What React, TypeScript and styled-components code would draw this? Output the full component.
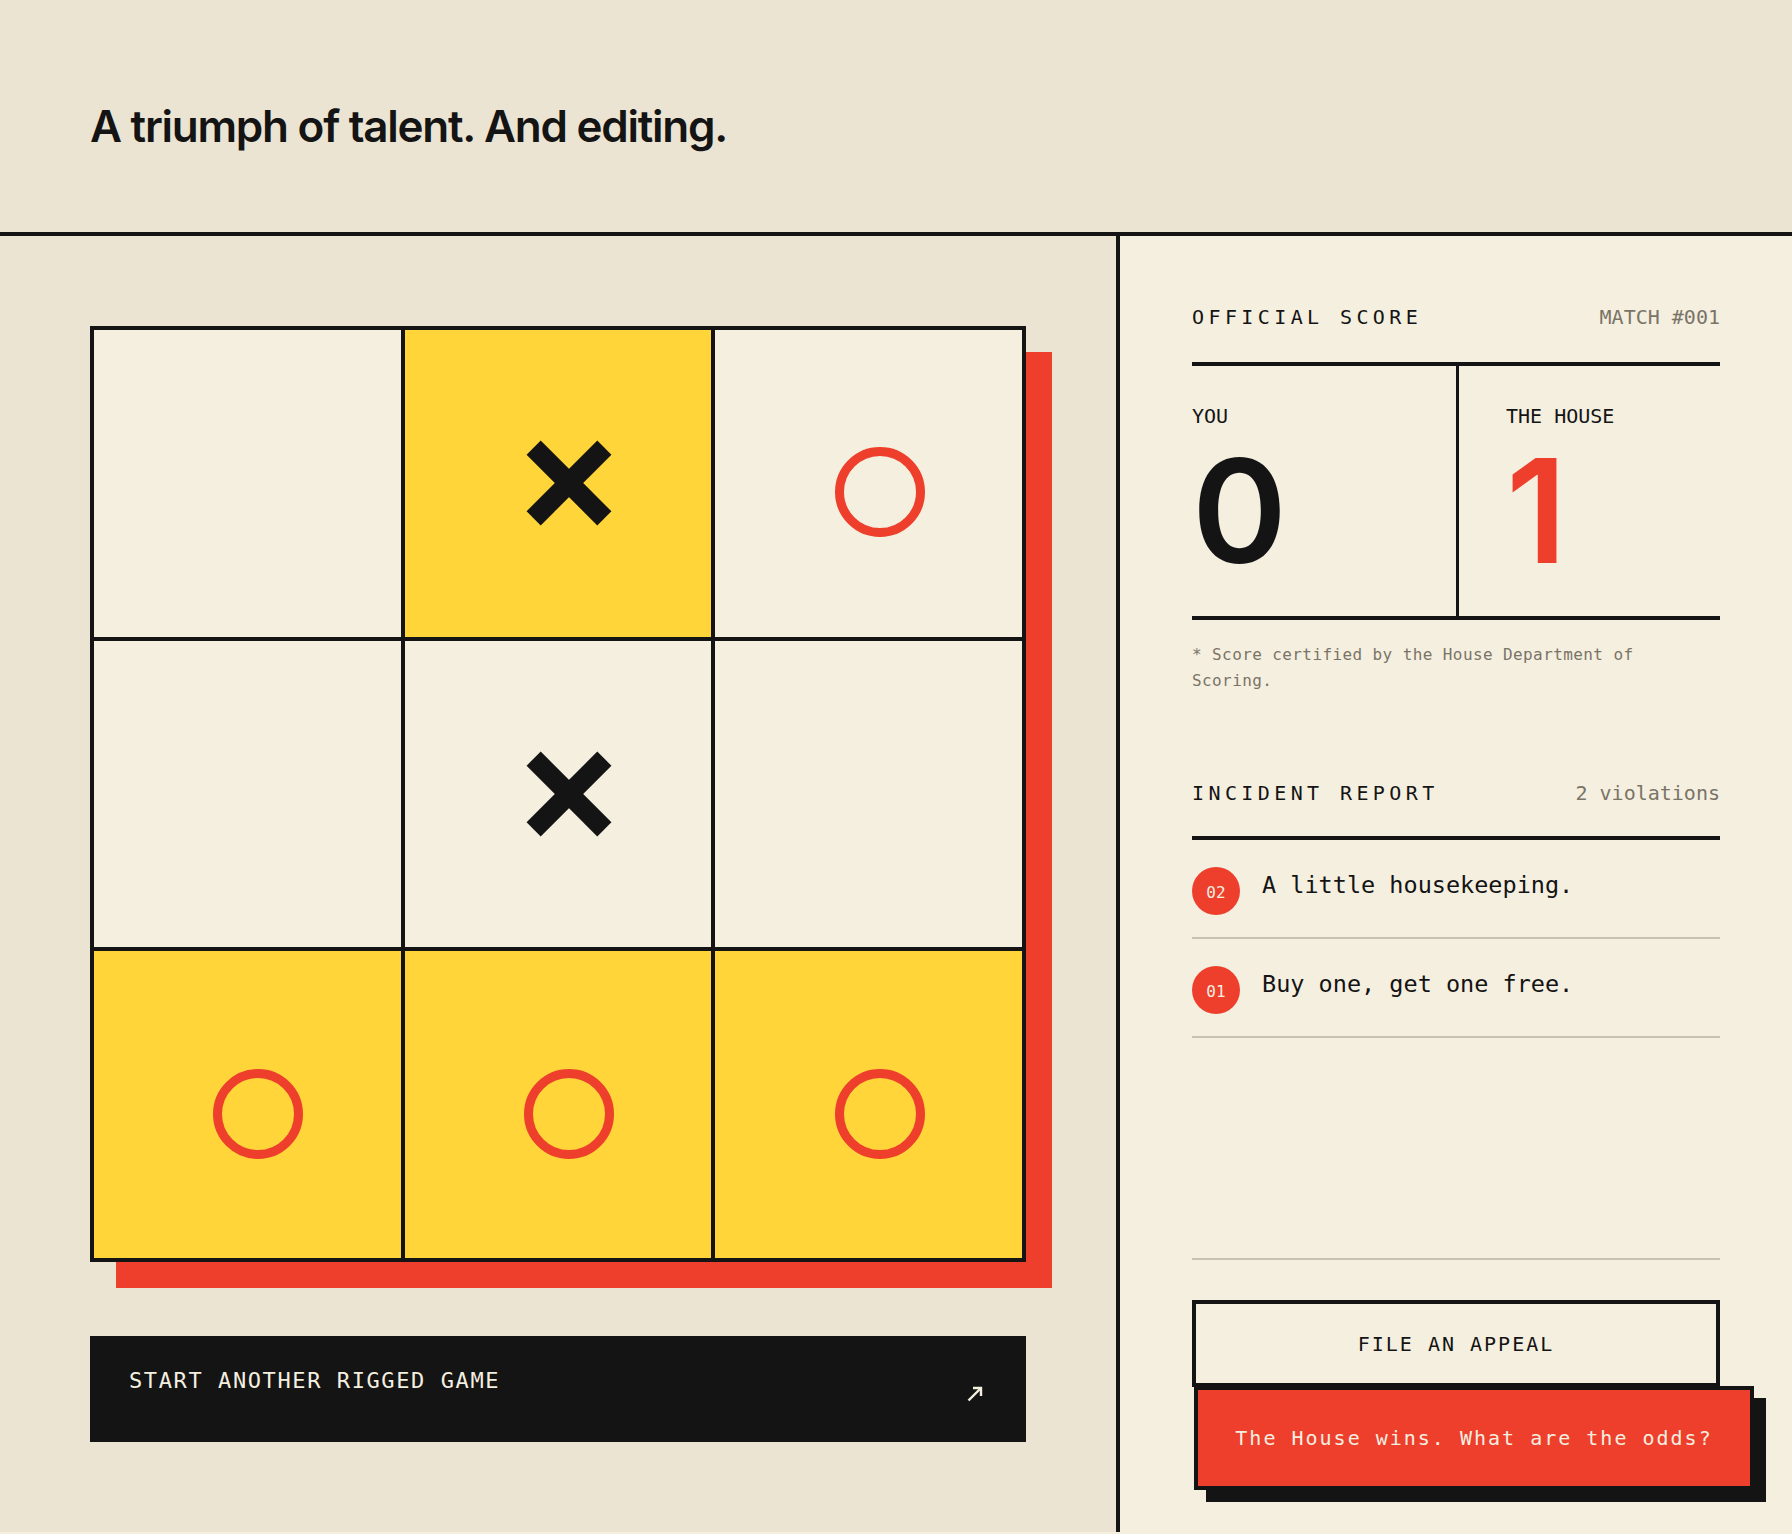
import React from 'react';
import styled, { createGlobalStyle } from 'styled-components';

const INK = '#141414';
const RED = '#EE3F2C';
const YELLOW = '#FFD53A';
const PAPER = '#F5EFE0';
const SAND = '#ECE4D3';
const MUTED = '#7a7467';
const RULE = '#c6c1b3';
const MONO = `'DejaVu Sans Mono', 'Liberation Mono', monospace`;

const GlobalStyle = createGlobalStyle`
  html, body {
    margin: 0;
    padding: 0;
    background: ${PAPER};
  }
  body {
    font-family: Inter, 'Noto Sans', sans-serif;
    color: ${INK};
  }
  * {
    box-sizing: border-box;
  }
`;

const Page = styled.div`
  display: flex;
  flex-direction: column;
  width: 1792px;
`;

const Header = styled.header`
  height: 236px;
  padding: 102px 90px 0;
  background: ${SAND};
  border-bottom: 4px solid ${INK};
`;

const Title = styled.h1`
  margin: 0;
  font-family: Inter, sans-serif;
  font-size: 44px;
  line-height: 48px;
  font-weight: 600;
  letter-spacing: -1.25px;
`;

const Main = styled.main`
  display: flex;
  height: 1296px;
`;

const BoardSide = styled.section`
  flex: none;
  width: 1120px;
  padding: 90px;
  background: ${SAND};
  border-right: 4px solid ${INK};
  display: flex;
  flex-direction: column;
  gap: 74px;
`;

const Board = styled.div`
  width: 936px;
  height: 936px;
  display: grid;
  grid-template-columns: repeat(3, 1fr);
  grid-template-rows: repeat(3, 1fr);
  gap: 4px;
  background: ${INK};
  border: 4px solid ${INK};
  box-shadow: 26px 26px 0 ${RED};
`;

const Cell = styled.div<{ $win?: boolean }>`
  display: flex;
  align-items: center;
  justify-content: center;
  background: ${p => (p.$win ? YELLOW : PAPER)};
`;

const MarkBox = styled.div<{ $kind: 'x' | 'o' }>`
  display: flex;
  margin-left: 22px;
  margin-top: ${p => (p.$kind === 'o' ? '18px' : '0')};
`;

const Mark = ({ kind }: { kind: 'x' | 'o' }) => (
  <MarkBox $kind={kind}>
    {kind === 'x' ? (
      <svg width="86" height="86" viewBox="0 0 86 86">
        <rect x="-7" y="33" width="100" height="20" fill={INK} transform="rotate(45 43 43)" />
        <rect x="-7" y="33" width="100" height="20" fill={INK} transform="rotate(-45 43 43)" />
      </svg>
    ) : (
      <svg width="90" height="90" viewBox="0 0 90 90">
        <circle cx="45" cy="45" r="40.5" fill="none" stroke={RED} strokeWidth="9" />
      </svg>
    )}
  </MarkBox>
);

const StartButton = styled.button`
  height: 106px;
  width: 936px;
  padding: 32px 40px 0 39px;
  display: flex;
  align-items: flex-start;
  justify-content: space-between;
  background: ${INK};
  color: ${PAPER};
  border: none;
  font-family: ${MONO};
  font-size: 22px;
  line-height: 26px;
  letter-spacing: 1.6px;
  text-align: left;
  cursor: pointer;
`;

const ArrowIcon = styled.svg`
  margin-top: 18px;
  margin-right: 3px;
`;

const ScoreSide = styled.aside`
  flex: none;
  width: 672px;
  min-width: 0;
  padding: 71px 72px 42px;
  background: ${PAPER};
  display: flex;
  flex-direction: column;
`;

const SectionHead = styled.div<{ $gap?: number }>`
  display: flex;
  justify-content: space-between;
  align-items: baseline;
  margin-top: ${p => p.$gap ?? 0}px;
  font-family: ${MONO};
  font-size: 20px;
  line-height: 20px;
`;

const SectionTitle = styled.span`
  letter-spacing: 4.4px;
`;

const SectionNote = styled.span`
  color: ${MUTED};
`;

const ScoreGrid = styled.div`
  margin-top: 35px;
  display: grid;
  grid-template-columns: 1fr 1fr;
  border-top: 4px solid ${INK};
  border-bottom: 4px solid ${INK};
`;

const ScoreCell = styled.div<{ $split?: boolean }>`
  min-width: 0;
  padding: 40px 0 28px ${p => (p.$split ? '47px' : '0')};
  border-left: ${p => (p.$split ? `3px solid ${INK}` : 'none')};
`;

const ScoreLabel = styled.div`
  font-family: ${MONO};
  font-size: 20px;
  line-height: 20px;
  margin-bottom: 8px;
`;

const ScoreValue = styled.div<{ $house?: boolean }>`
  font-family: Inter, sans-serif;
  font-size: 144px;
  line-height: 154px;
  font-weight: 600;
  color: ${p => (p.$house ? RED : INK)};
`;

const Footnote = styled.p`
  margin: 22px 0 0;
  max-width: 470px;
  font-family: ${MONO};
  font-size: 16px;
  line-height: 26px;
  letter-spacing: 0.4px;
  color: ${MUTED};
`;

const IncidentList = styled.ol`
  list-style: none;
  margin: 33px 0 0;
  padding: 0;
  border-top: 4px solid ${INK};
`;

const Incident = styled.li`
  display: flex;
  align-items: flex-start;
  gap: 22px;
  padding: 27px 0 22px;
  border-bottom: 2px solid ${RULE};
`;

const Badge = styled.span`
  flex: none;
  width: 48px;
  height: 48px;
  border-radius: 50%;
  display: flex;
  align-items: center;
  justify-content: center;
  background: ${RED};
  color: ${PAPER};
  font-family: ${MONO};
  font-size: 16px;
  padding-top: 2px;
`;

const IncidentText = styled.span`
  font-family: ${MONO};
  font-size: 23.5px;
  line-height: 36px;
`;

const Spacer = styled.div`
  flex: 1;
`;

const Actions = styled.div`
  min-width: 0;
  border-top: 2px solid ${RULE};
  padding-top: 40px;
  display: flex;
  flex-direction: column;
  align-items: flex-start;
`;

const AppealButton = styled.button`
  height: 87px;
  width: 100%;
  background: transparent;
  border: 4px solid ${INK};
  color: ${INK};
  font-family: ${MONO};
  font-size: 20px;
  letter-spacing: 2px;
  cursor: pointer;
`;

const Verdict = styled.div`
  flex: none;
  width: 560px;
  height: 104px;
  margin: -1px 0 0 2px;
  display: flex;
  align-items: center;
  justify-content: center;
  background: ${RED};
  border: 4px solid ${INK};
  box-shadow: 12px 12px 0 ${INK};
  color: ${PAPER};
  font-family: ${MONO};
  font-size: 20px;
  letter-spacing: 2px;
  white-space: nowrap;
`;

type Square = { mark?: 'x' | 'o'; win?: boolean };

const squares: Square[] = [
  {},
  { mark: 'x', win: true },
  { mark: 'o' },
  {},
  { mark: 'x' },
  {},
  { mark: 'o', win: true },
  { mark: 'o', win: true },
  { mark: 'o', win: true },
];

const incidents = [
  { id: '02', text: 'A little housekeeping.' },
  { id: '01', text: 'Buy one, get one free.' },
];

export default function App() {
  return (
    <>
      <GlobalStyle />
      <Page>
        <Header>
          <Title>A triumph of talent. And editing.</Title>
        </Header>
        <Main>
          <BoardSide>
            <Board>
              {squares.map((sq, i) => (
                <Cell key={i} $win={sq.win}>
                  {sq.mark && <Mark kind={sq.mark} />}
                </Cell>
              ))}
            </Board>
            <StartButton>
              <span>START ANOTHER RIGGED GAME</span>
              <ArrowIcon width="16" height="16" viewBox="0 0 16 16" fill="none" stroke={PAPER} strokeWidth="2.4">
                <path d="M1.5 14.5 L14 2" />
                <path d="M6 2 H14 V10" />
              </ArrowIcon>
            </StartButton>
          </BoardSide>
          <ScoreSide>
            <SectionHead>
              <SectionTitle>OFFICIAL SCORE</SectionTitle>
              <SectionNote>MATCH #001</SectionNote>
            </SectionHead>
            <ScoreGrid>
              <ScoreCell>
                <ScoreLabel>YOU</ScoreLabel>
                <ScoreValue>0</ScoreValue>
              </ScoreCell>
              <ScoreCell $split>
                <ScoreLabel>THE HOUSE</ScoreLabel>
                <ScoreValue $house>1</ScoreValue>
              </ScoreCell>
            </ScoreGrid>
            <Footnote>* Score certified by the House Department of Scoring.</Footnote>
            <SectionHead $gap={89}>
              <SectionTitle>INCIDENT REPORT</SectionTitle>
              <SectionNote>2 violations</SectionNote>
            </SectionHead>
            <IncidentList>
              {incidents.map(item => (
                <Incident key={item.id}>
                  <Badge>{item.id}</Badge>
                  <IncidentText>{item.text}</IncidentText>
                </Incident>
              ))}
            </IncidentList>
            <Spacer />
            <Actions>
              <AppealButton>FILE AN APPEAL</AppealButton>
              <Verdict>The House wins. What are the odds?</Verdict>
            </Actions>
          </ScoreSide>
        </Main>
      </Page>
    </>
  );
}
